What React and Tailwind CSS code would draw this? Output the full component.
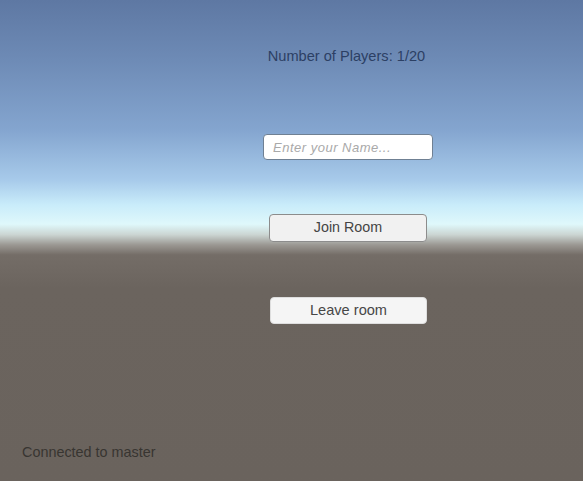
import { useState } from 'react';

function App() {
  const [name, setName] = useState('');
  const [players] = useState({ current: 1, max: 20 });
  const [status] = useState('Connected to master');

  return (
    <div className="h-[481px] w-full flex flex-col font-['Liberation_Sans',Arial,sans-serif] bg-[linear-gradient(to_bottom,#5e78a3_0%,#6d8ab5_12%,#84a5cf_27%,#a7caea_37.4%,#c9ecfa_42.6%,#dff8fb_46.6%,#cbd5d2_48.8%,#9b9893_50.9%,#746d67_53%,#6b645e_60%,#6a635d_100%)]">
      {/* Room panel */}
      <div className="pl-[263px] pt-[48px] flex flex-col w-[433px]">
        <p className="text-[14.6px] leading-[16px] text-[#2c4064] text-center pr-[3px]">
          Number of Players: {players.current}/{players.max}
        </p>

        <input
          type="text"
          value={name}
          onChange={e => setName(e.target.value)}
          placeholder="Enter your Name..."
          className="mt-[70px] w-[170px] h-[26px] px-[9px] bg-white border border-[#6f8093] rounded-[4px] text-[13px] italic tracking-[0.5px] text-[#333] placeholder:text-[#a9a9a9] outline-none"
        />

        <button className="mt-[54px] ml-[6px] w-[158px] h-[28px] bg-[#f1f1f1] border border-[#8c8c8c] rounded-[4px] text-[14.3px] text-[#444]">
          Join Room
        </button>

        <button className="mt-[55px] ml-[7px] w-[157px] h-[27px] bg-[#f5f5f5] border border-[#dedede] rounded-[4px] text-[14.6px] text-[#474747]">
          Leave room
        </button>
      </div>

      <div className="flex-1" />

      <p className="pl-[22px] pb-[20px] text-[14.4px] leading-[17px] text-[#383531]">
        {status}
      </p>
    </div>
  );
}

export default App;
